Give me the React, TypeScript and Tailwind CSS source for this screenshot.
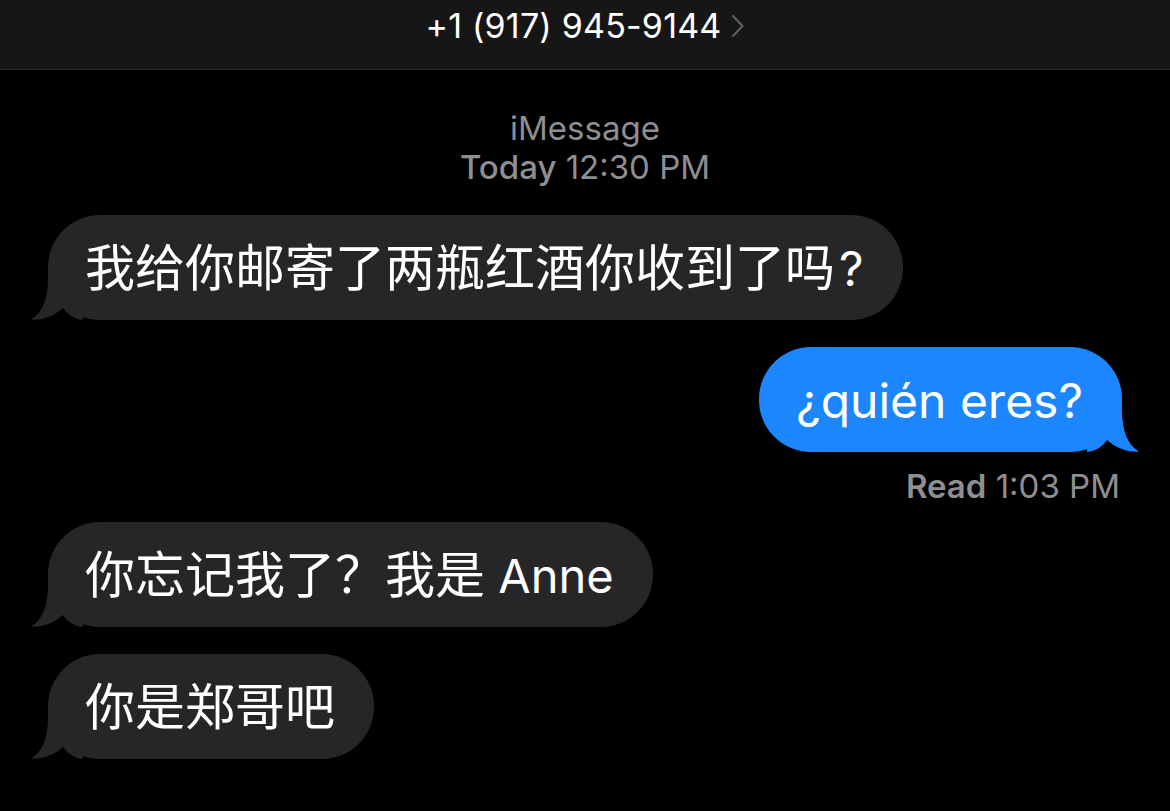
import React from 'react';

const Tail = ({ color, mine }: { color: string; mine?: boolean }) => (
  <svg
    width="56"
    height="50"
    viewBox="0 0 56 50"
    className={`absolute bottom-0 ${mine ? 'right-[-20px] -scale-x-100' : 'left-[-20px]'}`}
  >
    <path
      d="M20 0 L20 8 C20 30 14 43 3 49.6 C14 50.6 26 46 35 38 C40 45 46 49 55 50 L56 0 Z"
      fill={color}
    />
  </svg>
);

const Bubble = ({ children, mine }: { children: React.ReactNode; mine?: boolean }) => {
  const color = mine ? '#1b86fd' : '#262629';
  return (
    <div
      className={`relative h-[105px] w-fit flex items-center pl-[37px] pr-[39px] rounded-[52px] text-[50px] text-white leading-none ${
        mine ? 'bg-[#1b86fd] self-end' : 'bg-[#262629]'
      }`}
    >
      <Tail color={color} mine={mine} />
      <span className="relative whitespace-pre">{children}</span>
    </div>
  );
};

const App = () => {
  return (
    <div className="w-[1170px] h-[811px] bg-black overflow-hidden font-['Inter','Noto_Sans_CJK_SC',sans-serif]">
      <header className="h-[70px] bg-[#161616] border-b border-[#2a2a2a] flex justify-center">
        <div className="flex items-center h-[50px] gap-[8px] text-white text-[34px]">
          <span className="tracking-[0.2px]">+1 (917) 945-9144</span>
          <svg width="15" height="24" viewBox="0 0 15 24" className="mt-[1px]">
            <path d="M3 2 L12.5 12 L3 22" fill="none" stroke="#5e5e62" strokeWidth="2.2" strokeLinecap="round" strokeLinejoin="round" />
          </svg>
        </div>
      </header>

      <main className="flex flex-col px-[48px]">
        <div className="mt-[39px] text-center text-[#8e8e93] text-[33px] leading-[39px]">
          <div>iMessage</div>
          <div>
            <span className="font-medium">Today</span> 12:30 PM
          </div>
        </div>

        <div className="mt-[28px]">
          <Bubble>
            我给你邮寄了两瓶红酒你收到了吗
            <span lang="en" className="text-[48px] ml-[4px] font-['Inter',sans-serif]">?</span>
          </Bubble>
        </div>

        <div className="mt-[27px] flex flex-col">
          <Bubble mine>
            <span className="text-[48px]">¿quién eres?</span>
          </Bubble>
        </div>

        <div className="mt-[15px] text-right pr-[2px] text-[#8e8e93] text-[33px] leading-[39px]">
          <span className="font-semibold">Read</span> 1:03 PM
        </div>

        <div className="mt-[16px]">
          <Bubble>
            你忘记我了？我是<span className="text-[47px]"> Anne</span>
          </Bubble>
        </div>

        <div className="mt-[27px]">
          <Bubble>你是郑哥吧</Bubble>
        </div>
      </main>
    </div>
  );
};

export default App;
